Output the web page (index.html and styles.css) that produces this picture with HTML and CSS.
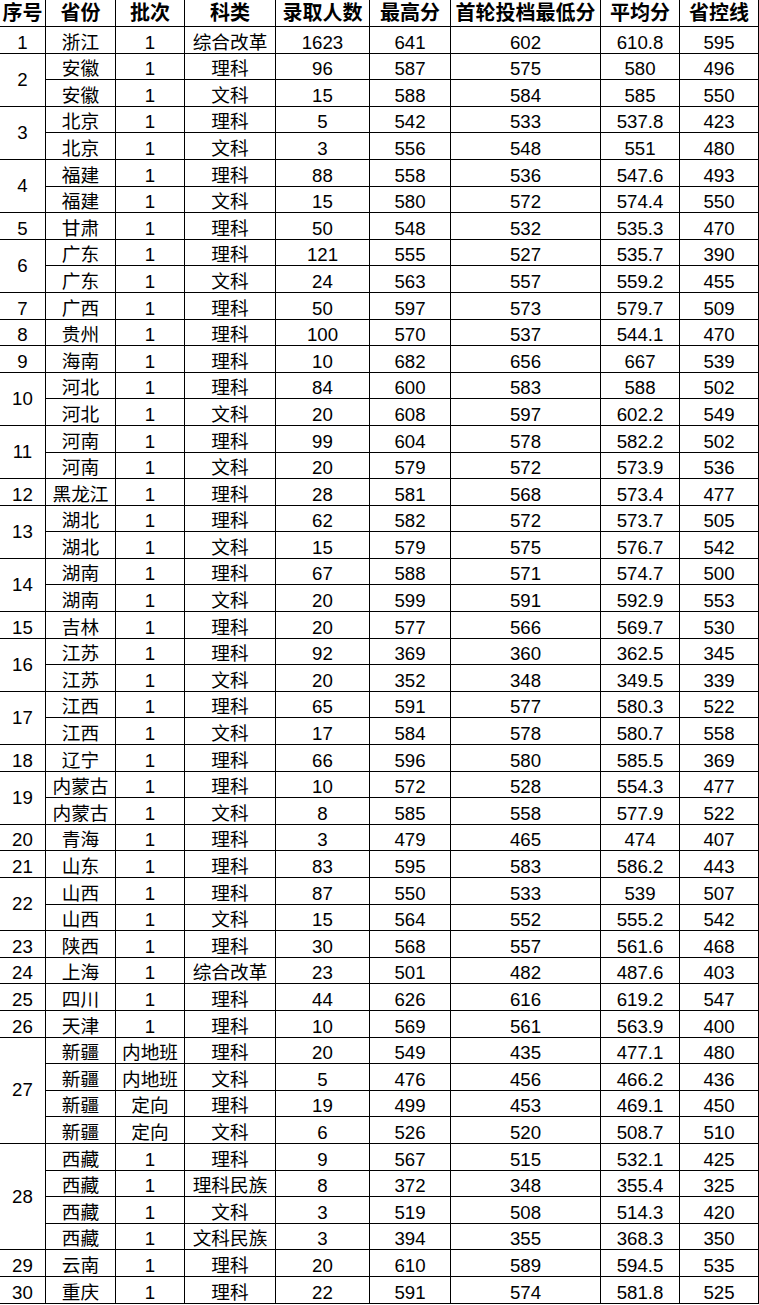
FILE: index.html
```html
<!DOCTYPE html>
<html lang="zh-CN">
<head>
<meta charset="utf-8">
<title>录取分数</title>
<link rel="stylesheet" href="styles.css">
</head>
<body>
<table class="adm">
<colgroup>
<col class="c1"><col class="c2"><col class="c3"><col class="c4"><col class="c5"><col class="c6"><col class="c7"><col class="c8"><col class="c9">
</colgroup>
<thead>
<tr class="head"><th>序号</th><th>省份</th><th>批次</th><th>科类</th><th>录取人数</th><th>最高分</th><th>首轮投档最低分</th><th>平均分</th><th>省控线</th></tr>
</thead>
<tbody>
<tr><td>1</td><td>浙江</td><td>1</td><td>综合改革</td><td>1623</td><td>641</td><td>602</td><td>610.8</td><td>595</td></tr>
<tr><td class="grp" rowspan="2">2</td><td>安徽</td><td>1</td><td>理科</td><td>96</td><td>587</td><td>575</td><td>580</td><td>496</td></tr>
<tr><td>安徽</td><td>1</td><td>文科</td><td>15</td><td>588</td><td>584</td><td>585</td><td>550</td></tr>
<tr><td class="grp" rowspan="2">3</td><td>北京</td><td>1</td><td>理科</td><td>5</td><td>542</td><td>533</td><td>537.8</td><td>423</td></tr>
<tr><td>北京</td><td>1</td><td>文科</td><td>3</td><td>556</td><td>548</td><td>551</td><td>480</td></tr>
<tr><td class="grp" rowspan="2">4</td><td>福建</td><td>1</td><td>理科</td><td>88</td><td>558</td><td>536</td><td>547.6</td><td>493</td></tr>
<tr><td>福建</td><td>1</td><td>文科</td><td>15</td><td>580</td><td>572</td><td>574.4</td><td>550</td></tr>
<tr><td>5</td><td>甘肃</td><td>1</td><td>理科</td><td>50</td><td>548</td><td>532</td><td>535.3</td><td>470</td></tr>
<tr><td class="grp" rowspan="2">6</td><td>广东</td><td>1</td><td>理科</td><td>121</td><td>555</td><td>527</td><td>535.7</td><td>390</td></tr>
<tr><td>广东</td><td>1</td><td>文科</td><td>24</td><td>563</td><td>557</td><td>559.2</td><td>455</td></tr>
<tr><td>7</td><td>广西</td><td>1</td><td>理科</td><td>50</td><td>597</td><td>573</td><td>579.7</td><td>509</td></tr>
<tr><td>8</td><td>贵州</td><td>1</td><td>理科</td><td>100</td><td>570</td><td>537</td><td>544.1</td><td>470</td></tr>
<tr><td>9</td><td>海南</td><td>1</td><td>理科</td><td>10</td><td>682</td><td>656</td><td>667</td><td>539</td></tr>
<tr><td class="grp" rowspan="2">10</td><td>河北</td><td>1</td><td>理科</td><td>84</td><td>600</td><td>583</td><td>588</td><td>502</td></tr>
<tr><td>河北</td><td>1</td><td>文科</td><td>20</td><td>608</td><td>597</td><td>602.2</td><td>549</td></tr>
<tr><td class="grp" rowspan="2">11</td><td>河南</td><td>1</td><td>理科</td><td>99</td><td>604</td><td>578</td><td>582.2</td><td>502</td></tr>
<tr><td>河南</td><td>1</td><td>文科</td><td>20</td><td>579</td><td>572</td><td>573.9</td><td>536</td></tr>
<tr><td>12</td><td>黑龙江</td><td>1</td><td>理科</td><td>28</td><td>581</td><td>568</td><td>573.4</td><td>477</td></tr>
<tr><td class="grp" rowspan="2">13</td><td>湖北</td><td>1</td><td>理科</td><td>62</td><td>582</td><td>572</td><td>573.7</td><td>505</td></tr>
<tr><td>湖北</td><td>1</td><td>文科</td><td>15</td><td>579</td><td>575</td><td>576.7</td><td>542</td></tr>
<tr><td class="grp" rowspan="2">14</td><td>湖南</td><td>1</td><td>理科</td><td>67</td><td>588</td><td>571</td><td>574.7</td><td>500</td></tr>
<tr><td>湖南</td><td>1</td><td>文科</td><td>20</td><td>599</td><td>591</td><td>592.9</td><td>553</td></tr>
<tr><td>15</td><td>吉林</td><td>1</td><td>理科</td><td>20</td><td>577</td><td>566</td><td>569.7</td><td>530</td></tr>
<tr><td class="grp" rowspan="2">16</td><td>江苏</td><td>1</td><td>理科</td><td>92</td><td>369</td><td>360</td><td>362.5</td><td>345</td></tr>
<tr><td>江苏</td><td>1</td><td>文科</td><td>20</td><td>352</td><td>348</td><td>349.5</td><td>339</td></tr>
<tr><td class="grp" rowspan="2">17</td><td>江西</td><td>1</td><td>理科</td><td>65</td><td>591</td><td>577</td><td>580.3</td><td>522</td></tr>
<tr><td>江西</td><td>1</td><td>文科</td><td>17</td><td>584</td><td>578</td><td>580.7</td><td>558</td></tr>
<tr><td>18</td><td>辽宁</td><td>1</td><td>理科</td><td>66</td><td>596</td><td>580</td><td>585.5</td><td>369</td></tr>
<tr><td class="grp" rowspan="2">19</td><td>内蒙古</td><td>1</td><td>理科</td><td>10</td><td>572</td><td>528</td><td>554.3</td><td>477</td></tr>
<tr><td>内蒙古</td><td>1</td><td>文科</td><td>8</td><td>585</td><td>558</td><td>577.9</td><td>522</td></tr>
<tr><td>20</td><td>青海</td><td>1</td><td>理科</td><td>3</td><td>479</td><td>465</td><td>474</td><td>407</td></tr>
<tr><td>21</td><td>山东</td><td>1</td><td>理科</td><td>83</td><td>595</td><td>583</td><td>586.2</td><td>443</td></tr>
<tr><td class="grp" rowspan="2">22</td><td>山西</td><td>1</td><td>理科</td><td>87</td><td>550</td><td>533</td><td>539</td><td>507</td></tr>
<tr><td>山西</td><td>1</td><td>文科</td><td>15</td><td>564</td><td>552</td><td>555.2</td><td>542</td></tr>
<tr><td>23</td><td>陕西</td><td>1</td><td>理科</td><td>30</td><td>568</td><td>557</td><td>561.6</td><td>468</td></tr>
<tr><td>24</td><td>上海</td><td>1</td><td>综合改革</td><td>23</td><td>501</td><td>482</td><td>487.6</td><td>403</td></tr>
<tr><td>25</td><td>四川</td><td>1</td><td>理科</td><td>44</td><td>626</td><td>616</td><td>619.2</td><td>547</td></tr>
<tr><td>26</td><td>天津</td><td>1</td><td>理科</td><td>10</td><td>569</td><td>561</td><td>563.9</td><td>400</td></tr>
<tr><td class="grp" rowspan="4">27</td><td>新疆</td><td>内地班</td><td>理科</td><td>20</td><td>549</td><td>435</td><td>477.1</td><td>480</td></tr>
<tr><td>新疆</td><td>内地班</td><td>文科</td><td>5</td><td>476</td><td>456</td><td>466.2</td><td>436</td></tr>
<tr><td>新疆</td><td>定向</td><td>理科</td><td>19</td><td>499</td><td>453</td><td>469.1</td><td>450</td></tr>
<tr><td>新疆</td><td>定向</td><td>文科</td><td>6</td><td>526</td><td>520</td><td>508.7</td><td>510</td></tr>
<tr><td class="grp" rowspan="4">28</td><td>西藏</td><td>1</td><td>理科</td><td>9</td><td>567</td><td>515</td><td>532.1</td><td>425</td></tr>
<tr><td>西藏</td><td>1</td><td>理科民族</td><td>8</td><td>372</td><td>348</td><td>355.4</td><td>325</td></tr>
<tr><td>西藏</td><td>1</td><td>文科</td><td>3</td><td>519</td><td>508</td><td>514.3</td><td>420</td></tr>
<tr><td>西藏</td><td>1</td><td>文科民族</td><td>3</td><td>394</td><td>355</td><td>368.3</td><td>350</td></tr>
<tr><td>29</td><td>云南</td><td>1</td><td>理科</td><td>20</td><td>610</td><td>589</td><td>594.5</td><td>535</td></tr>
<tr><td>30</td><td>重庆</td><td>1</td><td>理科</td><td>22</td><td>591</td><td>574</td><td>581.8</td><td>525</td></tr>
</tbody>
</table>
</body>
</html>
```
FILE: styles.css
```css
html, body {
  margin: 0;
  padding: 0;
  background: #fff;
}
body {
  overflow: hidden;
}
.adm {
  border-collapse: collapse;
  table-layout: fixed;
  width: 759px;
  margin: -1px 0 0 -1px;
  font-family: "Liberation Sans", "Noto Sans CJK SC", sans-serif;
  font-size: 14pt;
  color: #000;
}
.c1 { width: 46px; }
.c2 { width: 70px; }
.c3 { width: 69px; }
.c4 { width: 91px; }
.c5 { width: 94px; }
.c6 { width: 81px; }
.c7 { width: 150px; }
.c8 { width: 79px; }
.c9 { width: 79px; }
.adm th, .adm td {
  border: 1px solid #000;
  padding: 0;
  text-align: center;
  white-space: nowrap;
  overflow: hidden;
}
.adm td {
  font-weight: 400;
  line-height: 20px;
  vertical-align: bottom;
}
.adm td.grp {
  vertical-align: middle;
}
.adm th {
  font-weight: 700;
  font-size: 15pt;
  line-height: 22px;
  vertical-align: middle;
}
.head {
  height: 27px;
}
.adm tbody tr {
  height: 26.6px;
}
```
